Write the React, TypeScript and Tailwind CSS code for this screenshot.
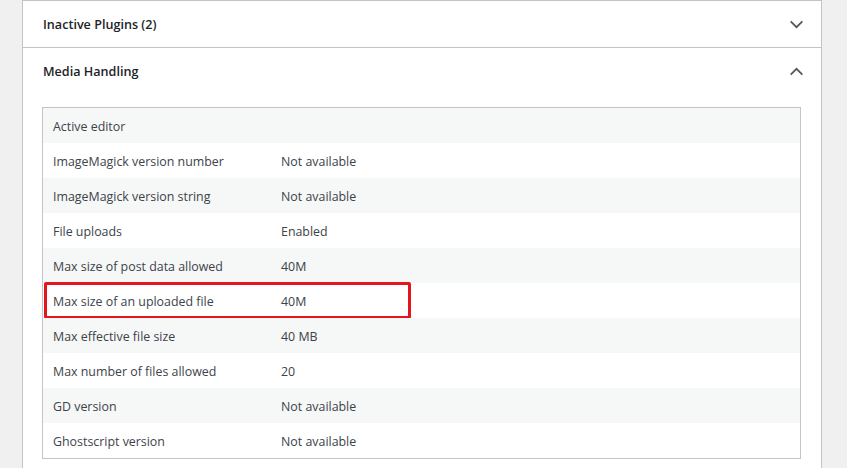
const rows: [string, string][] = [
  ["Active editor", ""],
  ["ImageMagick version number", "Not available"],
  ["ImageMagick version string", "Not available"],
  ["File uploads", "Enabled"],
  ["Max size of post data allowed", "40M"],
  ["Max size of an uploaded file", "40M"],
  ["Max effective file size", "40 MB"],
  ["Max number of files allowed", "20"],
  ["GD version", "Not available"],
  ["Ghostscript version", "Not available"],
];

function Chevron({ up }: { up?: boolean }) {
  return (
    <svg viewBox="0 0 16 10" className="h-[9px] w-[15px] text-[#50575e]" fill="none" stroke="currentColor" strokeWidth="2">
      {up ? <path d="M1.5 8.5L8 2l6.5 6.5" /> : <path d="M1.5 1.5L8 8l6.5-6.5" />}
    </svg>
  );
}

export default function App() {
  return (
    <div
      className="h-[468px] w-[847px] overflow-hidden bg-[#f0f0f1] pl-[22px]"
      style={{ fontFamily: '"Open Sans", "Noto Sans", sans-serif' }}
    >
      <div className="h-full w-[800px] border-x border-t border-[#c3c4c7] bg-white">
        <div className="flex h-[47px] items-center justify-between border-b border-[#c3c4c7] pl-[20px] pr-[17px]">
          <span className="pt-[3px] text-[12.6px] font-semibold text-[#1d2327]">Inactive Plugins (2)</span>
          <Chevron />
        </div>
        <div className="flex h-[46px] items-center justify-between pl-[20px] pr-[17px]">
          <span className="pt-[3px] text-[12.6px] font-semibold text-[#1d2327]">Media Handling</span>
          <Chevron up />
        </div>
        <div className="mt-[13px] ml-[19px] w-[759px] border border-[#c3c4c7]">
          {rows.map(([label, value], i) => (
            <div
              key={label}
              className={`relative flex h-[35px] items-center pt-[4px] text-[12.4px] text-[#3c434a] ${i % 2 === 0 ? "bg-[#f6f7f7]" : "bg-white"}`}
            >
              <span className="w-[238px] pl-[10px]">{label}</span>
              <span>{value}</span>
              {i === 5 && (
                <div className="absolute left-[1px] top-[-1px] h-[37px] w-[367px] rounded-[2px] border-[3px] border-[#e3151d]" />
              )}
            </div>
          ))}
        </div>
      </div>
    </div>
  );
}
